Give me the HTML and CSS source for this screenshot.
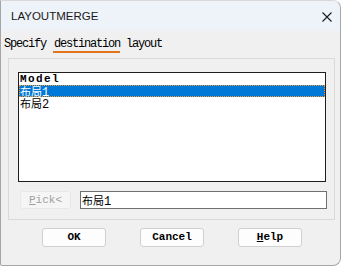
FILE: index.html
```html
<!DOCTYPE html>
<html>
<head>
<meta charset="utf-8">
<link rel="stylesheet" href="styles.css">
</head>
<body>
<div class="window">
  <div class="titlebar">
    <span class="title">LAYOUTMERGE</span>
    <svg class="close" width="10" height="10" viewBox="0 0 10 10"><path d="M0.5 0.5 L9.5 9.5 M9.5 0.5 L0.5 9.5" stroke="#1a1a1a" stroke-width="1.1" fill="none"/></svg>
  </div>
  <div class="content">
    <div class="label">Specify <span class="hl">destination</span> layout</div>
    <div class="group">
      <div class="listbox">
        <div class="item bold">Model</div>
        <div class="item sel"><span class="cjk">布局</span>1</div>
        <div class="item"><span class="cjk">布局</span>2</div>
      </div>
      <div class="pickrow">
        <div class="pick"><u>P</u>ick&lt;</div>
        <div class="edit"><span class="cjk">布局</span>1</div>
      </div>
    </div>
    <div class="buttons">
      <div class="btn">OK</div>
      <div class="btn">Cancel</div>
      <div class="btn"><u>H</u>elp</div>
    </div>
  </div>
</div>
</body>
</html>
```
FILE: styles.css
```css
html, body { margin: 0; padding: 0; background: #ffffff; }
.window {
  width: 341px; height: 266px; box-sizing: border-box;
  border: 1px solid #a6a6a6; border-top-color: #d8d8d8;
  border-radius: 0 8px 8px 2px;
  background: #f0f0f0; overflow: hidden;
  font-family: "Liberation Mono", monospace;
}
.titlebar {
  height: 30px; background: #eef2f9;
  display: flex; align-items: center; justify-content: space-between;
  padding: 0 8px 0 10px;
}
.title { font-family: "Liberation Sans", Arial, sans-serif; font-size: 11.5px; color: #1a1a1a; padding-bottom: 1px; }
.close { display: block; margin-top: 1px; }
.content { padding: 6px 0 0 0; }
.label {
  height: 21px; line-height: 14px; padding-left: 3px;
  font-size: 12px; letter-spacing: -1.2px; color: #000;
}
.hl { display: inline-block; border-bottom: 2px solid #e4741a; padding: 0 0 0 1px; margin-left: 1px; }
.group {
  margin-left: 7px; width: 327px; height: 162px; box-sizing: border-box;
  border: 1px solid #d9d9d9;
  padding: 13px 0 0 9px;
}
.listbox {
  width: 308px; height: 110px; box-sizing: border-box;
  border: 1px solid #1e1e1e; background: #fff;
}
.item {
  height: 12px; line-height: 12px; padding-left: 1px;
  font-size: 12px; color: #000; white-space: nowrap;
}
.bold { font-weight: bold; font-size: 11px; letter-spacing: 1.4px; }
.cjk { font-family: "Noto Sans CJK SC", sans-serif; font-size: 11px; }
.sel { background: #0078d7; color: #fff; outline: 1px dotted #f39a2c; outline-offset: -1px; }
.pickrow { display: flex; margin-top: 9px; height: 18px; }
.pick {
  margin-left: 2px; width: 51px; height: 18px; box-sizing: border-box;
  border: 1px solid #e8e8e8; border-radius: 3px; background: #f5f5f5;
  color: #a0a0a0; font-size: 11px; line-height: 16px; text-align: center;
}
.edit {
  margin-left: 9px; width: 247px; height: 18px; box-sizing: border-box;
  border: 1px solid #707070; background: #fff;
  font-size: 12px; line-height: 16px; padding-left: 1px; color: #000;
}
.buttons { display: flex; padding: 8px 0 0 41px; gap: 34px; }
.btn {
  width: 64px; height: 19px; box-sizing: border-box;
  border: 1px solid #d0d0d0; border-radius: 3px; background: #fdfdfd;
  font-size: 11px; font-weight: bold; line-height: 17px; text-align: center; color: #000;
}
```
